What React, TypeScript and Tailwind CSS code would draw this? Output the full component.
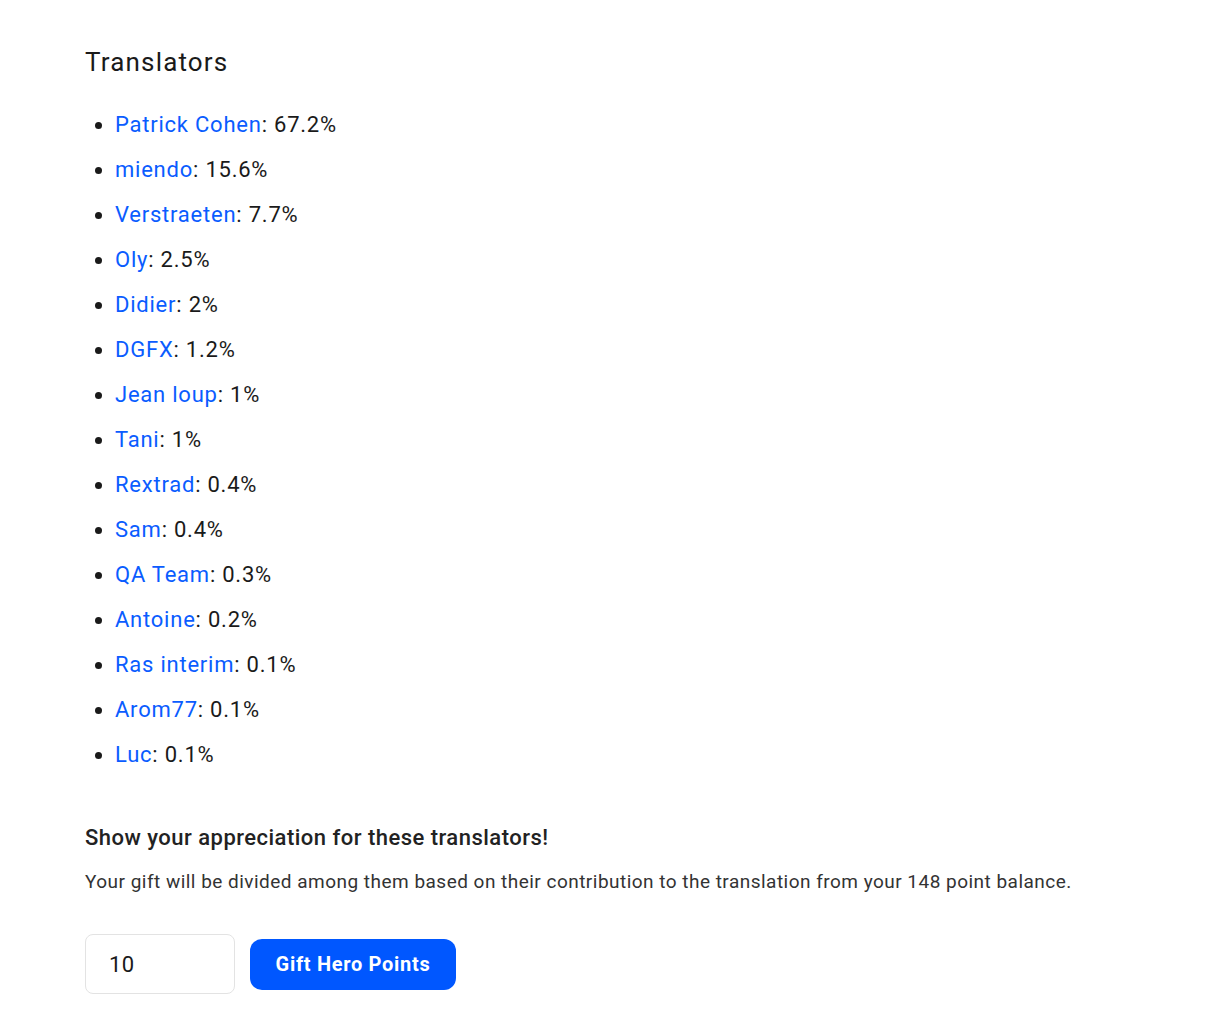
import { useState } from "react";

const TRANSLATORS = [
  { name: "Patrick Cohen", pct: "67.2%" },
  { name: "miendo", pct: "15.6%" },
  { name: "Verstraeten", pct: "7.7%" },
  { name: "Oly", pct: "2.5%" },
  { name: "Didier", pct: "2%" },
  { name: "DGFX", pct: "1.2%" },
  { name: "Jean loup", pct: "1%" },
  { name: "Tani", pct: "1%" },
  { name: "Rextrad", pct: "0.4%" },
  { name: "Sam", pct: "0.4%" },
  { name: "QA Team", pct: "0.3%" },
  { name: "Antoine", pct: "0.2%" },
  { name: "Ras interim", pct: "0.1%" },
  { name: "Arom77", pct: "0.1%" },
  { name: "Luc", pct: "0.1%" },
];

export default function App() {
  const [amount, setAmount] = useState("10");

  return (
    <div className="min-h-screen bg-white text-[#1a1a1a] font-['Roboto',sans-serif] tracking-[0.03em]">
      <div className="px-[85px] pt-[44px] pb-10">
        <h2 className="text-[26px] leading-9 font-normal tracking-[0.045em]">Translators</h2>

        <ul className="mt-[22px] list-disc pl-[30px] text-[22px] leading-[45px] tracking-[0.035em]">
          {TRANSLATORS.map((t) => (
            <li key={t.name}>
              <a href="#" className="text-[#0a5cff]">
                {t.name}
              </a>
              : {t.pct}
            </li>
          ))}
        </ul>

        <h3 className="mt-[45px] text-[22px] leading-8 font-medium text-[#222]">
          Show your appreciation for these translators!
        </h3>
        <p className="mt-[14px] text-[19px] leading-7 text-[#333]">
          Your gift will be divided among them based on their contribution to the translation from your 148 point balance.
        </p>

        <div className="mt-[38px] flex items-center gap-[15px]">
          <input
            value={amount}
            onChange={(e) => setAmount(e.target.value)}
            className="w-[150px] h-[60px] rounded-lg border border-[#e3e3e3] px-[23px] text-[22px] outline-none"
          />
          <button
            type="button"
            className="h-[51px] w-[206px] rounded-xl bg-[#0057ff] text-white text-[20px] font-bold tracking-[0.035em]"
          >
            Gift Hero Points
          </button>
        </div>
      </div>
    </div>
  );
}
